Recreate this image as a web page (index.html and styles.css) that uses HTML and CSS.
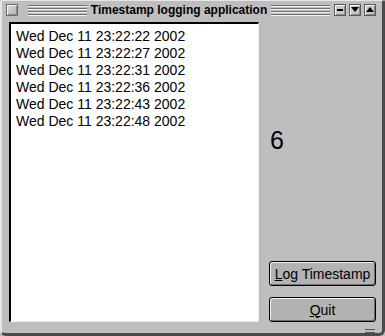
FILE: index.html
```html
<!DOCTYPE html>
<html>
<head>
<meta charset="utf-8">
<link rel="stylesheet" href="styles.css">
</head>
<body>
<div class="window">
  <div class="titlebar">
    <span class="tb-square"></span>
    <span class="grooves"></span>
    <span class="title">Timestamp logging application</span>
    <span class="grooves"></span>
    <span class="tb-btns">
      <span class="tb-btn"><span class="dash"></span></span>
      <span class="tb-btn"><svg width="8" height="6" viewBox="0 0 8 6"><polygon points="0,0 8,0 4,5" fill="#000"/></svg></span>
      <span class="tb-btn"><svg width="8" height="6" viewBox="0 0 8 6"><polygon points="0,5 8,5 4,0" fill="#000"/></svg></span>
    </span>
  </div>
  <div class="main">
    <div class="list">
      <div class="item">Wed Dec 11 23:22:22 2002</div>
      <div class="item">Wed Dec 11 23:22:27 2002</div>
      <div class="item">Wed Dec 11 23:22:31 2002</div>
      <div class="item">Wed Dec 11 23:22:36 2002</div>
      <div class="item">Wed Dec 11 23:22:43 2002</div>
      <div class="item">Wed Dec 11 23:22:48 2002</div>
    </div>
    <div class="side">
      <div class="count">6</div>
      <button class="btn"><u>L</u>og Timestamp</button>
      <button class="btn"><u>Q</u>uit</button>
    </div>
  </div>
  <span class="grip"></span>
</div>
</body>
</html>
```
FILE: styles.css
```css
html, body {
  margin: 0;
  padding: 0;
  background: #bebebe;
}
.window {
  position: relative;
  box-sizing: border-box;
  width: 385px;
  height: 336px;
  background: #bebebe;
  border-left: 2px solid #e6e6e6;
  border-top: 1px solid #e6e6e6;
  border-right: 3px solid #4a4a4a;
  border-bottom: 3px solid #4a4a4a;
  border-radius: 2px 2px 6px 6px;
  display: flex;
  flex-direction: column;
  font-family: "Liberation Sans", Arial, sans-serif;
}
.titlebar {
  height: 18px;
  display: flex;
  align-items: center;
  padding: 0 6px 0 4px;
  box-sizing: border-box;
}
.tb-square {
  width: 12px;
  height: 12px;
  box-sizing: border-box;
  border: 1px solid #6a6a6a;
  box-shadow: inset 1px 1px #f4f4f4, inset -1px -1px #8a8a8a;
  background: linear-gradient(135deg, #d8d8d8, #b4b4b4);
  margin-right: 10px;
}
.grooves {
  flex: 1;
  height: 11px;
  background: repeating-linear-gradient(to bottom, #6e6e6e 0, #6e6e6e 1px, #f0f0f0 1px, #f0f0f0 2px, transparent 2px, transparent 3px);
}
.title {
  font-weight: bold;
  font-size: 12px;
  color: #000;
  padding: 0 4px;
  white-space: nowrap;
}
.tb-btns {
  display: flex;
  gap: 3px;
  margin-left: 4px;
}
.tb-btn {
  width: 12px;
  height: 12px;
  box-sizing: border-box;
  border: 1px solid #5a5a5a;
  box-shadow: inset 1px 1px #f4f4f4, inset -1px -1px #8a8a8a;
  background: #c8c8c8;
  display: flex;
  align-items: center;
  justify-content: center;
}
.dash {
  width: 6px;
  height: 2px;
  background: #000;
}
.main {
  flex: 1;
  display: flex;
  gap: 10px;
  padding: 3px 6px 11px 7px;
}
.list {
  width: 250px;
  box-sizing: border-box;
  background: #fff;
  border-top: 2px solid #000;
  border-left: 2px solid #000;
  border-right: 1px solid #ececec;
  border-bottom: 1px solid #ececec;
  padding: 4px 0 0 5px;
}
.item {
  font-size: 14px;
  line-height: 17px;
  color: #000;
  white-space: nowrap;
}
.side {
  flex: 1;
  display: flex;
  flex-direction: column;
}
.count {
  flex: 1;
  display: flex;
  align-items: center;
  font-size: 25px;
  color: #000;
  padding-left: 1px;
  padding-bottom: 3px;
}
.btn {
  height: 25px;
  width: 107px;
  box-sizing: border-box;
  border: 1px solid #000;
  border-radius: 3px;
  background: #b2b2b2;
  box-shadow: inset 1px 1px #f2f2f2, inset -1px -1px #707070;
  font-family: "Liberation Sans", Arial, sans-serif;
  font-size: 14px;
  color: #000;
  padding: 0;
  margin: 0;
}
.btn + .btn {
  margin-top: 11px;
}
.btn u {
  text-decoration-thickness: 1px;
}
.grip {
  position: absolute;
  right: 7px;
  bottom: 0px;
  width: 10px;
  height: 4px;
  border-top: 1px solid #5a5a5a;
  border-bottom: 1px solid #5a5a5a;
  box-sizing: border-box;
}
```
